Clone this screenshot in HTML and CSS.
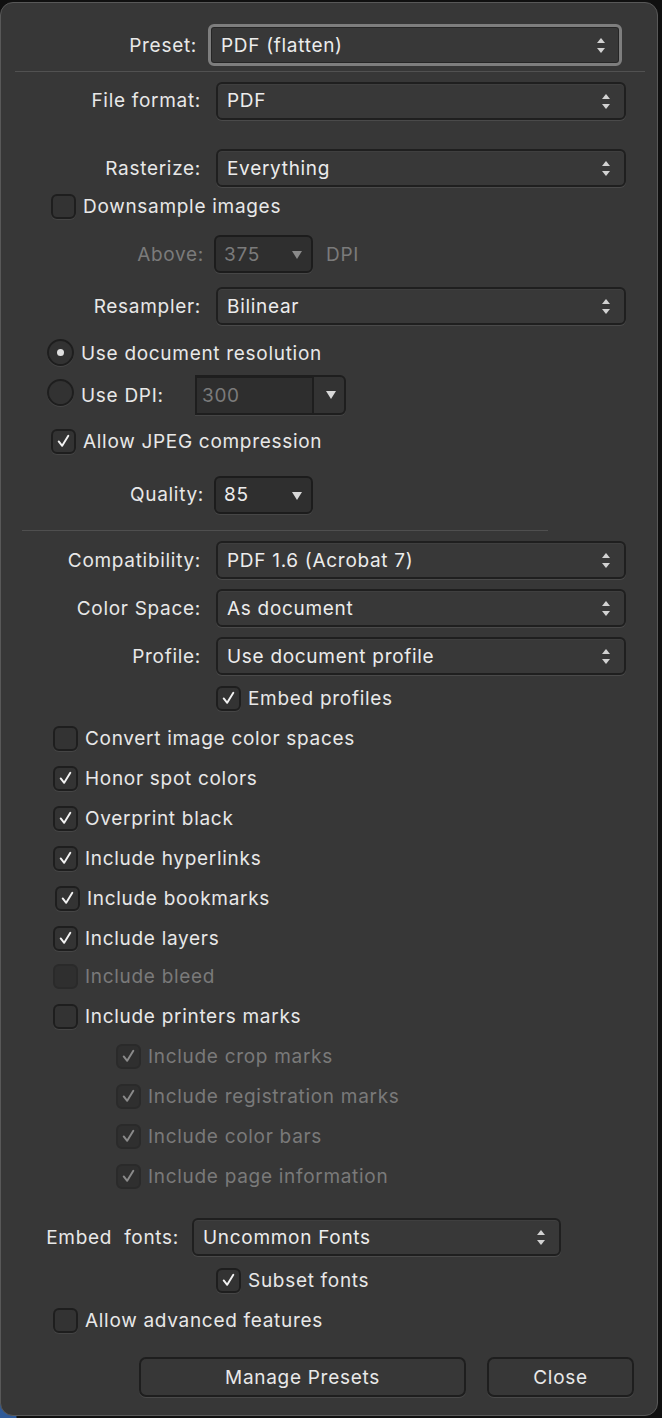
FILE: index.html
```html
<!DOCTYPE html>
<html>
<head>
<meta charset="utf-8">
<link rel="stylesheet" href="styles.css">
</head>
<body>
<div class="panel">
  <div class="row r-preset">
    <span class="lbl lbl-preset">Preset:</span>
    <div class="select focus w-preset">PDF (flatten)<span class="updown"></span></div>
  </div>
  <div class="sep sep-top"></div>

  <div class="row r-format">
    <span class="lbl lbl-a">File format:</span>
    <div class="select w-wide">PDF<span class="updown"></span></div>
  </div>
  <div class="row r-raster">
    <span class="lbl lbl-a">Rasterize:</span>
    <div class="select w-wide">Everything<span class="updown"></span></div>
  </div>
  <div class="row crow r-down cx50">
    <span class="cb"></span><span class="ctext">Downsample images</span>
  </div>
  <div class="row r-above">
    <span class="lbl lbl-s dis">Above:</span>
    <div class="mini dis">375<span class="tri"></span></div>
    <span class="dpi dis">DPI</span>
  </div>
  <div class="row r-resamp">
    <span class="lbl lbl-a">Resampler:</span>
    <div class="select w-wide">Bilinear<span class="updown"></span></div>
  </div>
  <div class="row r-radio1">
    <span class="radio on"></span><span class="rtext">Use document resolution</span>
  </div>
  <div class="row r-radio2">
    <span class="radio"></span><span class="rtext rtext-dpi">Use DPI:</span>
    <div class="combo"><span class="combo-field">300</span><span class="combo-btn"><span class="tri"></span></span></div>
  </div>
  <div class="row crow r-jpeg cx50">
    <span class="cb checked"><svg viewBox="0 0 24 24"><path d="M6.5 12.5 L10.5 17.5 L17.5 6"/></svg></span><span class="ctext">Allow JPEG compression</span>
  </div>
  <div class="row r-quality">
    <span class="lbl lbl-s">Quality:</span>
    <div class="mini">85<span class="tri"></span></div>
  </div>
  <div class="sep sep-mid"></div>

  <div class="row r-compat">
    <span class="lbl lbl-a">Compatibility:</span>
    <div class="select w-wide">PDF 1.6 (Acrobat 7)<span class="updown"></span></div>
  </div>
  <div class="row r-std">
    <span class="lbl lbl-a">Color Space:</span>
    <div class="select w-wide">As document<span class="updown"></span></div>
  </div>
  <div class="row r-std">
    <span class="lbl lbl-a">Profile:</span>
    <div class="select w-wide">Use document profile<span class="updown"></span></div>
  </div>
  <div class="row crow r-embedp cx215">
    <span class="cb checked"><svg viewBox="0 0 24 24"><path d="M6.5 12.5 L10.5 17.5 L17.5 6"/></svg></span><span class="ctext">Embed profiles</span>
  </div>

  <div class="row crow r-list first cx52">
    <span class="cb"></span><span class="ctext">Convert image color spaces</span>
  </div>
  <div class="row crow r-list cx52">
    <span class="cb checked"><svg viewBox="0 0 24 24"><path d="M6.5 12.5 L10.5 17.5 L17.5 6"/></svg></span><span class="ctext">Honor spot colors</span>
  </div>
  <div class="row crow r-list cx52">
    <span class="cb checked"><svg viewBox="0 0 24 24"><path d="M6.5 12.5 L10.5 17.5 L17.5 6"/></svg></span><span class="ctext">Overprint black</span>
  </div>
  <div class="row crow r-list cx52">
    <span class="cb checked"><svg viewBox="0 0 24 24"><path d="M6.5 12.5 L10.5 17.5 L17.5 6"/></svg></span><span class="ctext">Include hyperlinks</span>
  </div>
  <div class="row crow r-list cx54">
    <span class="cb checked"><svg viewBox="0 0 24 24"><path d="M6.5 12.5 L10.5 17.5 L17.5 6"/></svg></span><span class="ctext">Include bookmarks</span>
  </div>
  <div class="row crow r-list cx52">
    <span class="cb checked"><svg viewBox="0 0 24 24"><path d="M6.5 12.5 L10.5 17.5 L17.5 6"/></svg></span><span class="ctext">Include layers</span>
  </div>
  <div class="row crow r-list r-bleed cx52 disabled">
    <span class="cb"></span><span class="ctext">Include bleed</span>
  </div>
  <div class="row crow r-list cx52">
    <span class="cb"></span><span class="ctext">Include printers marks</span>
  </div>

  <div class="row crow r-list cx115 disabled">
    <span class="cb checked"><svg viewBox="0 0 24 24"><path d="M6.5 12.5 L10.5 17.5 L17.5 6"/></svg></span><span class="ctext">Include crop marks</span>
  </div>
  <div class="row crow r-list cx115 disabled">
    <span class="cb checked"><svg viewBox="0 0 24 24"><path d="M6.5 12.5 L10.5 17.5 L17.5 6"/></svg></span><span class="ctext">Include registration marks</span>
  </div>
  <div class="row crow r-list cx115 disabled">
    <span class="cb checked"><svg viewBox="0 0 24 24"><path d="M6.5 12.5 L10.5 17.5 L17.5 6"/></svg></span><span class="ctext">Include color bars</span>
  </div>
  <div class="row crow r-list cx115 disabled">
    <span class="cb checked"><svg viewBox="0 0 24 24"><path d="M6.5 12.5 L10.5 17.5 L17.5 6"/></svg></span><span class="ctext">Include page information</span>
  </div>

  <div class="row r-fonts">
    <span class="lbl lbl-fonts">Embed&nbsp; fonts:</span>
    <div class="select w-fonts">Uncommon Fonts<span class="updown"></span></div>
  </div>
  <div class="row crow r-subset cx215">
    <span class="cb checked"><svg viewBox="0 0 24 24"><path d="M6.5 12.5 L10.5 17.5 L17.5 6"/></svg></span><span class="ctext">Subset fonts</span>
  </div>
  <div class="row crow r-list cx52">
    <span class="cb"></span><span class="ctext">Allow advanced features</span>
  </div>

  <div class="row r-buttons">
    <div class="btn btn-manage">Manage Presets</div>
    <div class="btn btn-close">Close</div>
  </div>
</div>
</body>
</html>
```

FILE: styles.css
```css
html, body {
  margin: 0;
  padding: 0;
}
body {
  width: 662px;
  height: 1418px;
  overflow: hidden;
  background: radial-gradient(circle at 0 100%, #2f5a98 0, #2f5a98 16px, rgba(0,0,0,0) 17px), #101010;
  font-family: Inter, "Noto Sans", "Liberation Sans", sans-serif;
  font-size: 19px;
  letter-spacing: 0.7px;
  color: #e8e8e8;
}
.panel {
  box-sizing: border-box;
  margin-top: 2px;
  width: 658px;
  height: 1414px;
  background: #373737;
  border: 1px solid #585858;
  border-radius: 13px;
  padding-top: 21px;
  overflow: hidden;
}
.row {
  display: flex;
  align-items: center;
}
.lbl {
  flex: none;
  text-align: right;
  white-space: nowrap;
}
.lbl-preset { width: 196px; margin-right: 11px; }
.lbl-a { width: 200px; margin-right: 15px; }
.lbl-s { width: 203px; margin-right: 10px; }
.lbl-fonts { width: 178px; margin-right: 13px; }
.dis { color: #7b7b7b; }

.select {
  position: relative;
  box-sizing: border-box;
  height: 38px;
  border: 2px solid #1f1f1f;
  border-radius: 6px;
  background: #383838;
  box-shadow: 0 1px 0 #4a4a4a, inset 0 1px 0 #3f3f3f;
  padding-left: 9px;
  display: flex;
  align-items: center;
  color: #ececec;
}
.w-wide { width: 410px; }
.w-preset { width: 414px; height: 42px; }
.w-fonts { width: 369px; }
.select.focus {
  border: 3px solid #7e7e7e;
  box-shadow: inset 0 0 0 1px #262626;
  padding-left: 10px;
}
.updown {
  position: absolute;
  right: 14px;
  top: 50%;
  width: 8px;
  height: 15px;
  margin-top: -7px;
}
.updown::before, .updown::after {
  content: "";
  position: absolute;
  left: 0;
  border-left: 4px solid transparent;
  border-right: 4px solid transparent;
}
.updown::before {
  top: 0;
  border-bottom: 5px solid #d2d2d2;
}
.updown::after {
  bottom: 0;
  border-top: 5px solid #d2d2d2;
}

.mini {
  position: relative;
  box-sizing: border-box;
  width: 99px;
  height: 38px;
  border: 2px solid #1c1c1c;
  border-radius: 6px;
  background: #2f2f2f;
  box-shadow: 0 1px 0 #464646;
  padding-left: 8px;
  display: flex;
  align-items: center;
  color: #ececec;
}
.mini.dis { color: #7b7b7b; }
.tri {
  position: absolute;
  right: 9px;
  top: 50%;
  margin-top: -3px;
  border-left: 5px solid transparent;
  border-right: 5px solid transparent;
  border-top: 8px solid #d8d8d8;
}
.mini.dis .tri { border-top-color: #8a8a8a; }
.dpi { margin-left: 13px; }

.r-preset { height: 42px; }
.sep {
  height: 1px;
  background: #515151;
}
.sep-top { margin: 5px 12px 10px 14px; }
.sep-mid { margin: 17px 109px 10px 21px; background: #4f4f4f; }
.r-format { height: 37px; }
.r-raster { margin-top: 30px; height: 38px; }
.r-down { margin-top: 6px; height: 26px; }
.r-above { margin-top: 16px; height: 38px; }
.r-resamp { margin-top: 14px; height: 38px; }
.r-radio1 { margin-top: 13px; height: 28px; padding-left: 46px; }
.r-radio1 .rtext { margin-top: 3px; }
.r-radio2 { margin-top: 9px; height: 40px; padding-left: 46px; }
.r-jpeg { margin-top: 13px; height: 26px; }
.r-quality { margin-top: 22px; height: 37px; }
.r-compat { height: 38px; }
.r-std { margin-top: 10px; height: 38px; }
.r-embedp { margin-top: 10px; height: 26px; }
.r-list { margin-top: 14px; height: 26px; }
.r-list.r-bleed { margin-top: 12px; }
.r-fonts { margin-top: 29px; height: 38px; }
.r-subset { margin-top: 11px; height: 26px; }
.r-buttons { margin-top: 24px; height: 40px; }

.cx50 { padding-left: 50px; }
.cx52 { padding-left: 52px; }
.cx54 { padding-left: 54px; }
.cx115 { padding-left: 115px; }
.cx215 { padding-left: 215px; }

.cb {
  flex: none;
  box-sizing: border-box;
  width: 25px;
  height: 25px;
  border: 2px solid #1e1e1e;
  border-radius: 6px;
  background: #333333;
  box-shadow: 0 1px 0 #454545;
  display: flex;
  align-items: center;
  justify-content: center;
}
.cb svg {
  width: 22px;
  height: 22px;
  fill: none;
  stroke: #f2f2f2;
  stroke-width: 2.2;
  stroke-linecap: round;
  stroke-linejoin: round;
}
.ctext {
  margin-left: 7px;
  white-space: nowrap;
}
.disabled .ctext { color: #7a7a7a; }
.disabled .cb { background: #2f2f2f; border-color: #2a2a2a; box-shadow: none; }
.disabled .cb svg { stroke: #8a8a8a; }

.radio {
  flex: none;
  box-sizing: border-box;
  width: 27px;
  height: 27px;
  border: 2px solid #1e1e1e;
  border-radius: 50%;
  background: #323232;
  box-shadow: 0 1px 0 #454545;
  display: flex;
  align-items: center;
  justify-content: center;
}
.radio.on::after {
  content: "";
  width: 7px;
  height: 7px;
  border-radius: 50%;
  background: #e0e0e0;
}
.r-radio2 .radio { margin-top: -6px; }
.rtext {
  margin-left: 7px;
  white-space: nowrap;
}
.rtext-dpi { width: 114px; }

.combo {
  display: flex;
  height: 40px;
  width: 151px;
  box-shadow: 0 1px 0 #454545;
  border-radius: 0 6px 6px 0;
}
.combo-field {
  box-sizing: border-box;
  width: 117px;
  height: 40px;
  border: 2px solid #1e1e1e;
  border-top-width: 3px;
  border-right: none;
  background: #2e2e2e;
  color: #7b7b7b;
  padding-left: 5px;
  display: flex;
  align-items: center;
}
.combo-btn {
  position: relative;
  box-sizing: border-box;
  width: 34px;
  height: 40px;
  border: 2px solid #1e1e1e;
  border-radius: 0 6px 6px 0;
  background: #333333;
}
.combo-btn .tri {
  right: 8px;
  margin-top: -4px;
}

.btn {
  box-sizing: border-box;
  height: 40px;
  border: 2px solid #1e1e1e;
  border-radius: 7px;
  background: #373737;
  box-shadow: 0 1px 0 #4a4a4a;
  display: flex;
  align-items: center;
  justify-content: center;
  color: #e8e8e8;
}
.btn-manage { margin-left: 138px; width: 327px; }
.btn-close { margin-left: 21px; width: 147px; }
```
